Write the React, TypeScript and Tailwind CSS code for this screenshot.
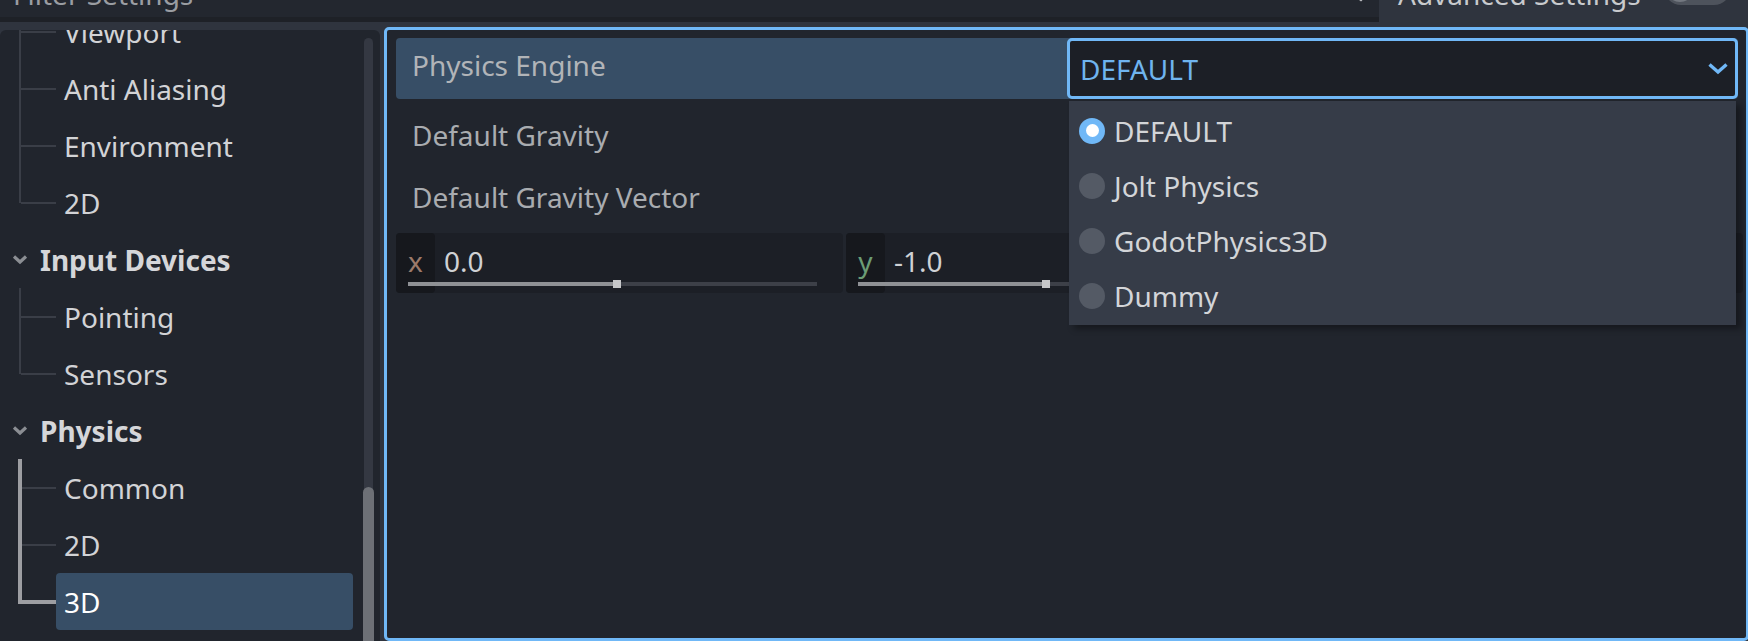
import { Search } from "lucide-react";

type TreeRow = {
  label: string;
  header?: boolean;
  line?: "mid" | "last";
  bright?: boolean;
  selected?: boolean;
};

const rows: TreeRow[] = [
  { label: "Viewport", line: "mid" },
  { label: "Anti Aliasing", line: "mid" },
  { label: "Environment", line: "mid" },
  { label: "2D", line: "last" },
  { label: "Input Devices", header: true },
  { label: "Pointing", line: "mid" },
  { label: "Sensors", line: "last" },
  { label: "Physics", header: true },
  { label: "Common", line: "mid", bright: true },
  { label: "2D", line: "mid", bright: true },
  { label: "3D", line: "last", bright: true, selected: true },
];

const engines = ["DEFAULT", "Jolt Physics", "GodotPhysics3D", "Dummy"];

const Guide = ({ row }: { row: TreeRow }) => {
  if (row.bright && row.line === "last") {
    return (
      <div className="w-[56px] h-full flex shrink-0">
        <div className="ml-[18px] w-[38px] h-[31px] border-l-4 border-b-4 border-[#9d9ea2]" />
      </div>
    );
  }
  if (row.bright) {
    return (
      <div className="w-[56px] h-full flex shrink-0">
        <div className="ml-[18px] w-[4px] h-full bg-[#9d9ea2]" />
        <div className="w-[34px] h-[2px] self-center bg-[#3a3e47]" />
      </div>
    );
  }
  return (
    <div className="w-[56px] h-full flex shrink-0">
      <div
        className={
          row.line === "last"
            ? "ml-[19px] w-[2px] h-[29px] bg-[#3a3e47]"
            : "ml-[19px] w-[2px] h-full bg-[#3a3e47]"
        }
      />
      <div className="w-[35px] h-[2px] self-center bg-[#3a3e47]" />
    </div>
  );
};

const Tree = () => (
  <div className="flex-1 overflow-hidden">
    <div className="-mt-[27px] flex flex-col">
      {rows.map((row, i) =>
        row.header ? (
          <div key={i} className="h-[57px] flex items-center shrink-0">
            <svg width="16" height="11" viewBox="0 0 16 11" className="ml-[12px]">
              <polyline
                points="2,2.5 8,8 14,2.5"
                fill="none"
                stroke="#8b8e93"
                strokeWidth="3.2"
              />
            </svg>
            <span className="ml-[12px] font-bold text-[#d5d6d9] leading-[38px]">
              {row.label}
            </span>
          </div>
        ) : (
          <div key={i} className="h-[57px] flex shrink-0">
            <Guide row={row} />
            <div
              className={
                row.selected
                  ? "w-[297px] h-full flex items-center pl-[8px] rounded-[4px] bg-[#374e66] text-white leading-[38px]"
                  : "w-[297px] h-full flex items-center pl-[8px] text-[#d2d3d6] leading-[38px]"
              }
            >
              {row.label}
            </div>
          </div>
        )
      )}
    </div>
  </div>
);

const Slider = ({ filled }: { filled: number }) => (
  <div className="col-start-1 col-span-2 row-start-2 ml-[12px] w-[409px] h-[4px] flex items-center">
    <div className="h-full bg-[#8f9195]" style={{ width: filled }} />
    <div className="w-[8px] h-[8px] shrink-0 bg-[#c6c7c9]" />
    <div className="flex-1 h-full bg-[#3d4048]" />
  </div>
);

const VectorField = ({
  axis,
  color,
  value,
  filled,
}: {
  axis?: string;
  color?: string;
  value?: string;
  filled: number;
}) => (
  <div className="w-[447px] h-[60px] shrink-0 rounded-[4px] bg-[#1c1f26] grid grid-cols-[39px_1fr] grid-rows-[49px_4px_7px]">
    <div className="col-start-1 row-start-1 row-span-3 rounded-[4px] bg-[#16181d] flex justify-center">
      {axis && <span className={`mt-[9px] leading-[38px] ${color}`}>{axis}</span>}
    </div>
    <div className="col-start-2 row-start-1 pl-[9px] mt-[9px] leading-[38px] text-[#cfd1d4]">
      {value}
    </div>
    <Slider filled={filled} />
  </div>
);

export default function App() {
  return (
    <div className="w-[1748px] h-[641px] overflow-hidden bg-[#2f343e] font-['Noto_Sans',sans-serif] text-[28px] flex flex-col">
      {/* filter bar */}
      <div className="h-[22px] flex shrink-0">
        <div className="w-[1379px] flex flex-col">
          <div className="h-[17px] bg-[#23272f] overflow-hidden flex">
            <span className="pl-[13px] -mt-[25px] leading-[38px] text-[#9a9da2]">
              Filter Settings
            </span>
            <Search
              size={24}
              strokeWidth={2.5}
              className="ml-auto mr-[15px] -mt-[21px] text-[#b4b6ba]"
            />
          </div>
          <div className="h-[5px] bg-[#1e2127]" />
        </div>
        <div className="flex-1 flex overflow-hidden">
          <span className="pl-[19px] -mt-[25px] leading-[38px] text-[#c8cacd] whitespace-nowrap">
            Advanced Settings
          </span>
          <div className="ml-[23px] -mt-[29px] w-[67px] h-[34px] shrink-0 rounded-full bg-[#4e535c] flex items-center pl-[2px]">
            <div className="w-[28px] h-[28px] rounded-full bg-[#737880]" />
          </div>
        </div>
      </div>

      <div className="flex-1 flex pt-[5px] min-h-0">
        {/* sections tree */}
        <div className="w-[380px] mt-[3px] shrink-0 rounded-t-[6px] bg-[#21252d] flex overflow-hidden">
          <Tree />
          <div className="w-[11px] mt-[8px] mr-[6px] shrink-0 flex justify-center">
            <div className="w-[9px] h-full rounded-t-full bg-[#343842] flex flex-col items-center">
              <div className="h-[449px] shrink-0" />
              <div className="w-[11px] flex-1 rounded-t-full bg-[#6d7076]" />
            </div>
          </div>
        </div>

        {/* inspector */}
        <div className="ml-[4px] w-[1365px] shrink-0 relative rounded-[5px] border-[3px] border-[#70b8f7] bg-[#21252d] pt-[8px] pl-[9px] pr-[8px] flex flex-col">
          <div className="h-[61px] shrink-0 flex rounded-[4px] bg-[#374e66]">
            <div className="flex-1 pl-[16px] pt-[8px] leading-[38px] text-[#b1b4b8]">
              Physics Engine
            </div>
            <div className="w-[671px] h-full rounded-[5px] border-[3px] border-[#70b8f7] bg-[#1c1f26] flex items-center pl-[10px] pr-[6px]">
              <span className="leading-[38px] text-[#6fb4ef]">DEFAULT</span>
              <svg width="22" height="13" viewBox="0 0 22 13" className="ml-auto">
                <polyline
                  points="2.5,2.5 11,10 19.5,2.5"
                  fill="none"
                  stroke="#70b8f7"
                  strokeWidth="3.4"
                />
              </svg>
            </div>
          </div>
          <div className="h-[64px] shrink-0 pl-[16px] pt-[17px] leading-[38px] text-[#a9acb0]">
            Default Gravity
          </div>
          <div className="h-[70px] shrink-0 pl-[16px] pt-[15px] leading-[38px] text-[#a9acb0]">
            Default Gravity Vector
          </div>
          <div className="flex gap-[3px]">
            <VectorField axis="x" color="text-[#9d7a6a]" value="0.0" filled={205} />
            <VectorField axis="y" color="text-[#6c9c75]" value="-1.0" filled={184} />
            <VectorField filled={205} />
          </div>

          {/* open option popup */}
          <div className="absolute left-[682px] top-[71px] w-[667px] h-[224px] bg-[#363c48] pt-[2px] shadow-[5px_4px_6px_rgba(0,0,0,0.35)] flex flex-col">
            {engines.map((name, i) => (
              <div key={name} className="h-[55px] shrink-0 flex items-center pl-[10px]">
                {i === 0 ? (
                  <div className="w-[26px] h-[26px] rounded-full bg-[#70b8f7] flex items-center justify-center">
                    <div className="w-[13px] h-[13px] rounded-full bg-white" />
                  </div>
                ) : (
                  <div className="w-[26px] h-[26px] rounded-full bg-[#545a65]" />
                )}
                <span className="ml-[9px] leading-[38px] text-[#d3d5d8]">{name}</span>
              </div>
            ))}
          </div>
        </div>
      </div>
    </div>
  );
}
